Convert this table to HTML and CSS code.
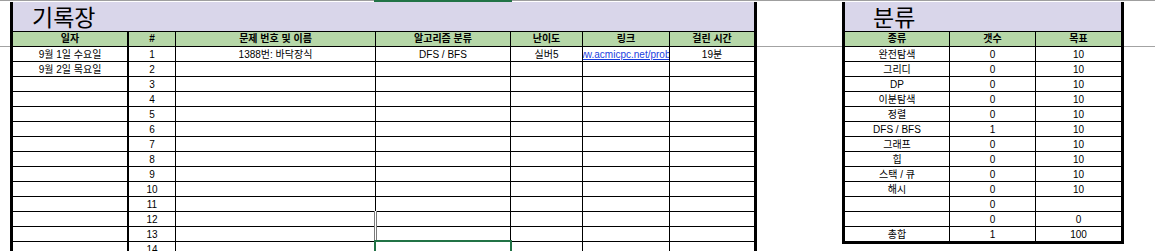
FILE: index.html
```html
<!DOCTYPE html>
<html lang="ko">
<head>
<meta charset="utf-8">
<title>기록장</title>
<link rel="stylesheet" href="styles.css">
</head>
<body>
<div class="colbar"><div class="colbar-pad"></div><div class="colbar-sel"></div><div class="colbar-rest"></div></div>
<div class="sheet">
  <section class="log">
    <div class="title">기록장</div>
    <div class="row head">
      <div class="c">일자</div><div class="c">#</div><div class="c">문제 번호 및 이름</div><div class="c">알고리즘 분류</div><div class="c">난이도</div><div class="c">링크</div><div class="c">걸린 시간</div>
    </div>
    <div class="row">
      <div class="c">9월 1일 수요일</div><div class="c">1</div><div class="c">1388번: 바닥장식</div><div class="c">DFS / BFS</div><div class="c">실버5</div><div class="c link"><span class="url">https://www.acmicpc.net/problem/1388</span></div><div class="c">19분</div>
    </div>
    <div class="row">
      <div class="c">9월 2일 목요일</div><div class="c">2</div><div class="c"></div><div class="c"></div><div class="c"></div><div class="c"></div><div class="c"></div>
    </div>
    <div class="row"><div class="c"></div><div class="c">3</div><div class="c"></div><div class="c"></div><div class="c"></div><div class="c"></div><div class="c"></div></div>
    <div class="row"><div class="c"></div><div class="c">4</div><div class="c"></div><div class="c"></div><div class="c"></div><div class="c"></div><div class="c"></div></div>
    <div class="row"><div class="c"></div><div class="c">5</div><div class="c"></div><div class="c"></div><div class="c"></div><div class="c"></div><div class="c"></div></div>
    <div class="row"><div class="c"></div><div class="c">6</div><div class="c"></div><div class="c"></div><div class="c"></div><div class="c"></div><div class="c"></div></div>
    <div class="row"><div class="c"></div><div class="c">7</div><div class="c"></div><div class="c"></div><div class="c"></div><div class="c"></div><div class="c"></div></div>
    <div class="row"><div class="c"></div><div class="c">8</div><div class="c"></div><div class="c"></div><div class="c"></div><div class="c"></div><div class="c"></div></div>
    <div class="row"><div class="c"></div><div class="c">9</div><div class="c"></div><div class="c"></div><div class="c"></div><div class="c"></div><div class="c"></div></div>
    <div class="row"><div class="c"></div><div class="c">10</div><div class="c"></div><div class="c"></div><div class="c"></div><div class="c"></div><div class="c"></div></div>
    <div class="row"><div class="c"></div><div class="c">11</div><div class="c"></div><div class="c"></div><div class="c"></div><div class="c"></div><div class="c"></div></div>
    <div class="row"><div class="c"></div><div class="c">12</div><div class="c"></div><div class="c"></div><div class="c"></div><div class="c"></div><div class="c"></div></div>
    <div class="row"><div class="c"></div><div class="c">13</div><div class="c"></div><div class="c"></div><div class="c"></div><div class="c"></div><div class="c"></div></div>
    <div class="row"><div class="c"></div><div class="c">14</div><div class="c"></div><div class="c"></div><div class="c"></div><div class="c"></div><div class="c"></div></div>
    <div class="resize-mark"></div>
    <div class="selection"></div>
  </section>

  <section class="stats">
    <div class="title">분류</div>
    <div class="row head"><div class="c">종류</div><div class="c">갯수</div><div class="c">목표</div></div>
    <div class="row"><div class="c">완전탐색</div><div class="c">0</div><div class="c">10</div></div>
    <div class="row"><div class="c">그리디</div><div class="c">0</div><div class="c">10</div></div>
    <div class="row"><div class="c">DP</div><div class="c">0</div><div class="c">10</div></div>
    <div class="row"><div class="c">이분탐색</div><div class="c">0</div><div class="c">10</div></div>
    <div class="row"><div class="c">정렬</div><div class="c">0</div><div class="c">10</div></div>
    <div class="row"><div class="c">DFS / BFS</div><div class="c">1</div><div class="c">10</div></div>
    <div class="row"><div class="c">그래프</div><div class="c">0</div><div class="c">10</div></div>
    <div class="row"><div class="c">힙</div><div class="c">0</div><div class="c">10</div></div>
    <div class="row"><div class="c">스택 / 큐</div><div class="c">0</div><div class="c">10</div></div>
    <div class="row"><div class="c">해시</div><div class="c">0</div><div class="c">10</div></div>
    <div class="row"><div class="c"></div><div class="c">0</div><div class="c"></div></div>
    <div class="row"><div class="c"></div><div class="c">0</div><div class="c">0</div></div>
    <div class="row"><div class="c">총합</div><div class="c">1</div><div class="c">100</div></div>
  </section>
</div>
</body>
</html>
```
FILE: styles.css
```css
html, body {
  margin: 0;
  padding: 0;
  background: #fff;
  height: 251px;
  overflow: hidden;
}
body {
  font-family: "Liberation Sans", "Noto Sans CJK KR", sans-serif;
  font-size: 10px;
  color: #000;
}

/* column header bottom edge */
.colbar {
  display: flex;
  height: 2px;
}
.colbar-pad, .colbar-rest {
  border-top: 1px solid #9f9f9f;
}
.colbar-pad { width: 374px; }
.colbar-sel { width: 138px; background: #217346; }
.colbar-rest { flex: 1; }

.sheet {
  display: flex;
  align-items: flex-start;
  gap: 85px;
  padding-left: 10px;
  height: 249px;
  overflow: hidden;
  background: linear-gradient(#a3a3a3, #a3a3a3) 0 44px / 100% 1px no-repeat;
}

.log, .stats {
  position: relative;
  border-left: 3px solid #000;
  border-right: 3px solid #000;
  box-sizing: border-box;
  flex: none;
}
.log { width: 747px; }
.stats {
  width: 282px;
  border-bottom: 3px solid #000;
}

.title {
  box-sizing: border-box;
  height: 30px;
  background: #d9d6ea;
  border-bottom: 1px solid #000;
  font-family: "Noto Sans CJK KR", sans-serif;
  font-size: 23px;
  line-height: 29px;
  padding-left: 19px;
}
.stats .title { padding-left: 28px; }

.row {
  display: grid;
  box-sizing: border-box;
  height: 15px;
  border-bottom: 1px solid #000;
}
.stats .row:last-child { border-bottom: none; height: 14px; }
.log .row { grid-template-columns: 116px 47px 200px 135px 72px 87px 84px; }
.stats .row { grid-template-columns: 105px 86px 85px; }

.c {
  box-sizing: border-box;
  border-right: 1px solid #000;
  text-align: center;
  white-space: nowrap;
  overflow: hidden;
  padding-top: 1px;
  line-height: 13px;
}
.c:last-child { border-right: none; }
.log .c:first-child { border-right-width: 2px; }

.head {
  background: #b6d7a8;
  font-weight: 700;
}
.head .c { padding-top: 0; }

.link {
  display: flex;
  justify-content: center;
}
.url {
  flex: none;
  color: #1a3ee0;
  text-decoration: underline;
}

/* overlays: Excel selection and column resize marker */
.selection {
  position: absolute;
  left: 361px;
  top: 238px;
  width: 138px;
  height: 20px;
  box-sizing: border-box;
  border: 2px solid #217346;
}
.resize-mark {
  position: absolute;
  left: 361px;
  top: 209px;
  width: 3px;
  height: 29px;
  box-sizing: border-box;
  border-left: 1px solid #7a7a7a;
  border-right: 1px solid #7a7a7a;
  background: #fff;
}
```
